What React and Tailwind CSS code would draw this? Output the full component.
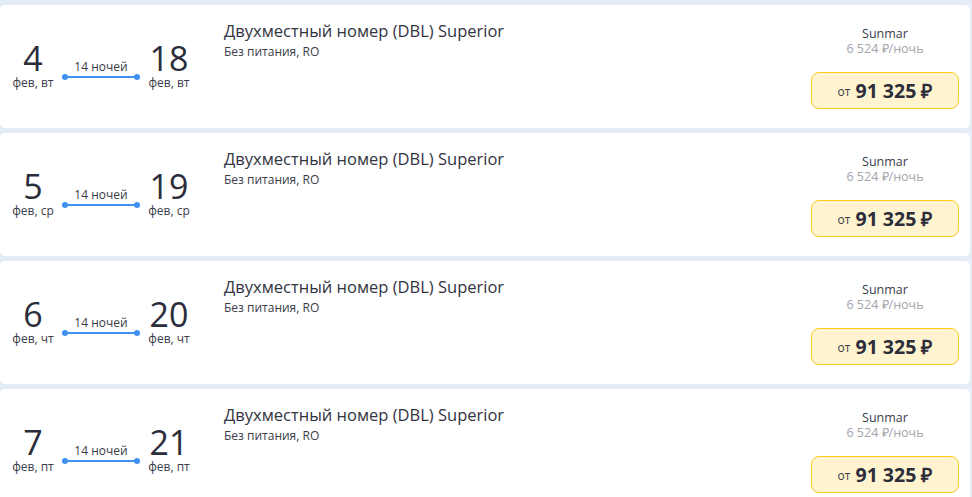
const offers = [
  { from: '4', fromDay: 'фев, вт', to: '18', toDay: 'фев, вт' },
  { from: '5', fromDay: 'фев, ср', to: '19', toDay: 'фев, ср' },
  { from: '6', fromDay: 'фев, чт', to: '20', toDay: 'фев, чт' },
  { from: '7', fromDay: 'фев, пт', to: '21', toDay: 'фев, пт' },
];

function DateCol({ num, day }) {
  return (
    <div className="flex flex-col items-center w-[46px]">
      <span className="text-[34px] leading-[34px] text-[#2b2d3a]">{num}</span>
      <span className="text-[12px] leading-[14px] text-[#3a3c48] mt-[1px]">{day}</span>
    </div>
  );
}

function OfferCard({ offer }) {
  return (
    <div className="h-[123px] w-[970px] shrink-0 rounded-[5px] bg-white flex">
      {/* dates */}
      <div className="flex items-center pl-[10px] w-[224px] pb-[2px]">
        <DateCol num={offer.from} day={offer.fromDay} />
        <div className="flex flex-col items-center w-[76px] mx-[7px] mt-[6px]">
          <span className="text-[12px] leading-[14px] text-[#3a3c48]">14 ночей</span>
          <div className="relative w-[72px] h-[2px] bg-[#3d8ff0] mt-[2px]">
            <span className="absolute -left-[3px] -top-[2px] w-[6px] h-[6px] rounded-full bg-[#3d8ff0]" />
            <span className="absolute -right-[3px] -top-[2px] w-[6px] h-[6px] rounded-full bg-[#3d8ff0]" />
          </div>
        </div>
        <DateCol num={offer.to} day={offer.toDay} />
      </div>

      {/* room */}
      <div className="flex-1 pt-[15px]">
        <p className="text-[16.5px] leading-[22px] text-[#333541]">Двухместный номер (DBL) Superior</p>
        <p className="text-[12px] leading-[16px] text-[#3a3c48] mt-[2px]">Без питания, RO</p>
      </div>

      {/* price */}
      <div className="w-[170px] flex flex-col items-center pt-[21px]">
        <span className="text-[12.5px] leading-[16px] text-[#3a3c48]">Sunmar</span>
        <span className="text-[12.5px] leading-[16px] text-[#a2a4ab] -mt-[1px]">6 524 ₽/ночь</span>
        <div className="mt-[15px] w-[148px] h-[37px] rounded-[8px] border border-[#fccb1c] bg-[#fff4cf] flex items-center justify-center gap-[5px]">
          <span className="text-[12px] text-[#3a3c48] mt-[3px]">от</span>
          <span className="text-[19.5px] font-bold text-[#2b2d3a]">91 325 ₽</span>
        </div>
      </div>
    </div>
  );
}

export default function App() {
  return (
    <div className="h-[497px] w-[972px] overflow-hidden bg-[#e4edf6] flex flex-col gap-[5px] pt-[5px]" style={{ fontFamily: '"Open Sans", sans-serif' }}>
      {offers.map((o, i) => (
        <OfferCard key={i} offer={o} />
      ))}
    </div>
  );
}
